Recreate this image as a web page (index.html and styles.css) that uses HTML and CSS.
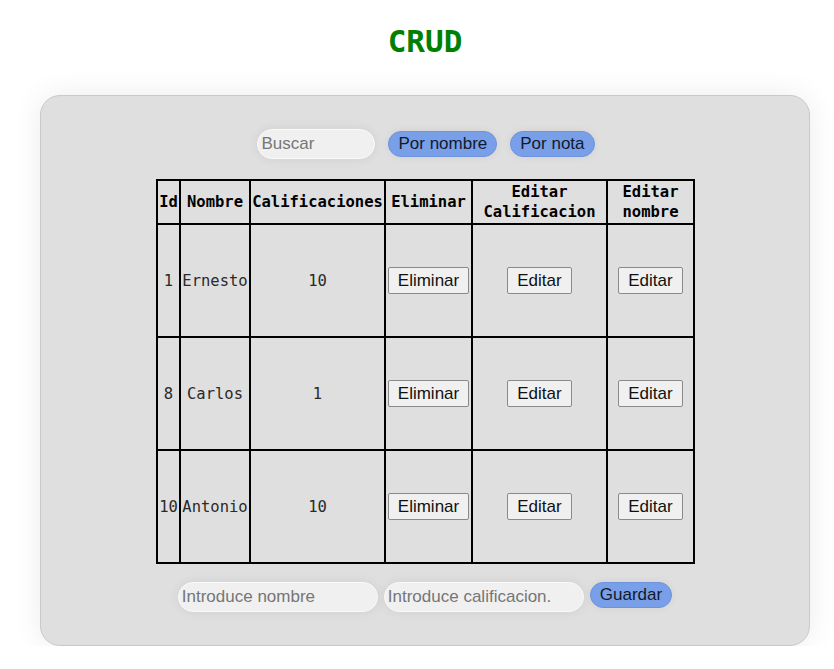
FILE: index.html
```html
<!DOCTYPE html>
<html lang="es">
<head>
<meta charset="utf-8">
<title>CRUD</title>
<link rel="stylesheet" href="styles.css">
</head>
<body>
<div class="page">
  <h1 class="title">CRUD</h1>
  <div class="card">
    <div class="search-row">
      <input class="field field-search" type="text" placeholder="Buscar">
      <button class="pill">Por nombre</button>
      <button class="pill">Por nota</button>
    </div>
    <table class="grid">
      <colgroup>
        <col class="c-id"><col class="c-name"><col class="c-grade"><col class="c-del"><col class="c-edg"><col class="c-edn">
      </colgroup>
      <thead>
        <tr>
          <th>Id</th><th>Nombre</th><th>Calificaciones</th><th>Eliminar</th><th>Editar Calificacion</th><th>Editar nombre</th>
        </tr>
      </thead>
      <tbody>
        <tr>
          <td>1</td><td>Ernesto</td><td>10</td>
          <td><button class="btn">Eliminar</button></td>
          <td><button class="btn">Editar</button></td>
          <td><button class="btn">Editar</button></td>
        </tr>
        <tr>
          <td>8</td><td>Carlos</td><td>1</td>
          <td><button class="btn">Eliminar</button></td>
          <td><button class="btn">Editar</button></td>
          <td><button class="btn">Editar</button></td>
        </tr>
        <tr>
          <td>10</td><td>Antonio</td><td>10</td>
          <td><button class="btn">Eliminar</button></td>
          <td><button class="btn">Editar</button></td>
          <td><button class="btn">Editar</button></td>
        </tr>
      </tbody>
    </table>
    <div class="add-row">
      <input class="field field-wide" type="text" placeholder="Introduce nombre">
      <input class="field field-wide" type="text" placeholder="Introduce calificacion.">
      <button class="pill pill-save">Guardar</button>
    </div>
  </div>
</div>
</body>
</html>
```
FILE: styles.css
```css
html, body {
  margin: 0;
  padding: 0;
  background: #ffffff;
}
body {
  font-family: "DejaVu Sans Mono", "Liberation Mono", monospace;
}
.page {
  width: 770px;
  margin-left: 40px;
  padding-top: 22px;
}
.title {
  margin: 0 0 35px 0;
  text-align: center;
  font-family: "DejaVu Sans Mono", monospace;
  font-size: 31px;
  line-height: 38px;
  font-weight: bold;
  color: #008000;
}
.card {
  box-sizing: border-box;
  height: 551px;
  background: #dfdfdf;
  border: 1px solid #c9c9c9;
  border-radius: 20px;
  box-shadow: 0 0 30px rgba(0, 0, 0, 0.08);
  padding-top: 33px;
  display: flex;
  flex-direction: column;
  align-items: center;
}
.search-row {
  display: flex;
  align-items: center;
  gap: 13px;
  height: 30px;
  margin-left: 2px;
}
.field {
  box-sizing: border-box;
  height: 30px;
  border: 1px solid #fafafa;
  border-radius: 15px;
  background: #f0f0f0;
  padding: 0 3px;
  font-family: "Liberation Sans", Arial, sans-serif;
  font-size: 17px;
  color: #222;
  box-shadow: 0 0 12px rgba(0, 0, 0, 0.07);
  outline: none;
}
.field::placeholder {
  color: #767676;
}
.field-search {
  width: 118px;
}
.field-wide {
  width: 200px;
}
.pill {
  box-sizing: border-box;
  height: 26px;
  padding: 0 9px;
  border: 1px solid #6d93df;
  border-radius: 13px;
  background: #789fe7;
  color: #111a2c;
  font-family: "Liberation Sans", Arial, sans-serif;
  font-size: 17px;
  box-shadow: 0 0 10px rgba(0, 0, 0, 0.06);
}
.grid {
  margin-top: 20px;
  width: 537px;
  table-layout: fixed;
  border-collapse: collapse;
  border: 2px solid #000;
  margin-left: 1px;
}
.c-id { width: 23px; }
.c-name { width: 70px; }
.c-grade { width: 135px; }
.c-del { width: 87px; }
.c-edg { width: 135px; }
.c-edn { width: 87px; }
.grid th, .grid td {
  border: 2px solid #000;
  padding: 1px;
  text-align: center;
  font-size: 15.5px;
  line-height: 20px;
  white-space: normal;
}
.grid th {
  height: 40px;
  font-weight: bold;
  color: #000;
}
.grid td {
  height: 109px;
  color: #2a2a2a;
}
.btn {
  box-sizing: border-box;
  height: 27px;
  padding: 0 9px;
  border: 1px solid #8a8a8a;
  border-radius: 2px;
  background: #f0f0f0;
  color: #111;
  font-family: "Liberation Sans", Arial, sans-serif;
  font-size: 17px;
}
.add-row {
  margin-top: 18px;
  display: flex;
  align-items: flex-start;
  gap: 6px;
}
.pill-save {
  padding: 0 9px;
}
```
